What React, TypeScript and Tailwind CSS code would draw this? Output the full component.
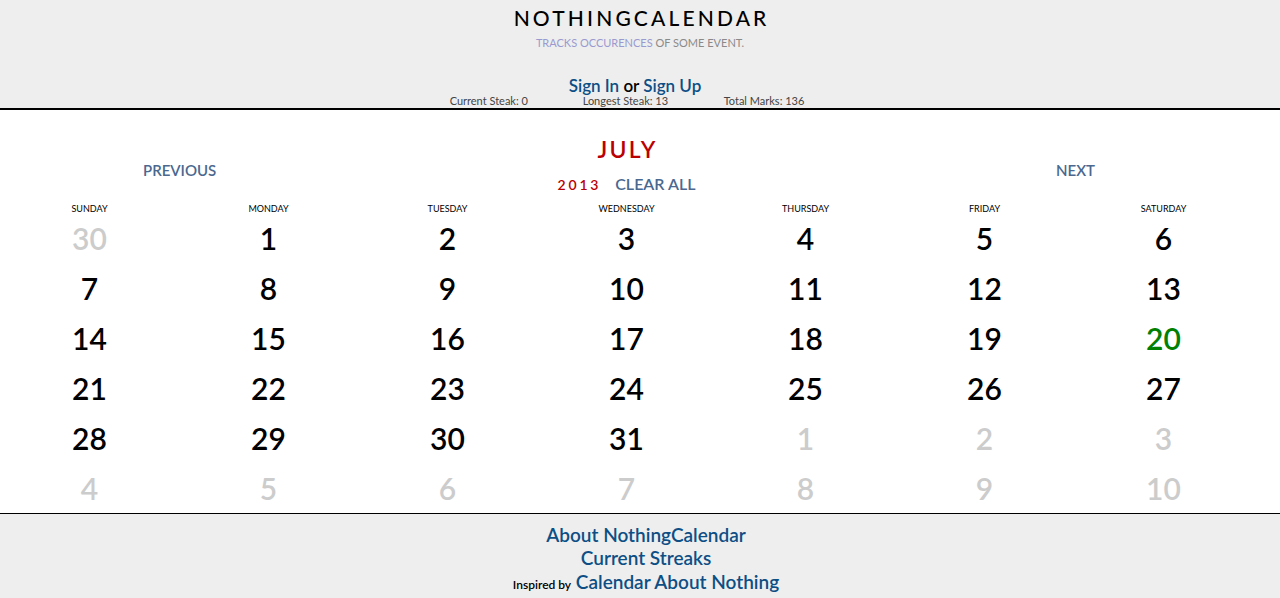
import React from 'react';

const DAYS = ['SUNDAY', 'MONDAY', 'TUESDAY', 'WEDNESDAY', 'THURSDAY', 'FRIDAY', 'SATURDAY'];

type Cell = { n: number; kind: 'other' | 'cur' | 'today' };

function buildCells(): Cell[] {
  const cells: Cell[] = [{ n: 30, kind: 'other' }];
  for (let d = 1; d <= 31; d++) cells.push({ n: d, kind: d === 20 ? 'today' : 'cur' });
  for (let d = 1; d <= 10; d++) cells.push({ n: d, kind: 'other' });
  return cells;
}

export default function App() {
  const cells = buildCells();
  return (
    <div className="min-h-[598px] bg-[#eeeeee] font-['Lato',sans-serif] text-black">
      <header className="h-[110px] border-b-2 border-black flex flex-col items-center">
        <h1 className="mt-[6px] text-[21px] leading-[24px] tracking-[0.15em] font-medium pl-[0.15em]">
          NOTHINGCALENDAR
        </h1>
        <p className="mt-[6px] text-[11px] leading-[14px] text-[#8a8a8a]">
          <span className="text-[#9a9ad0]">TRACKS OCCURENCES</span> OF SOME EVENT.
        </p>
        <p className="mt-[26px] text-[17px] leading-[20px] font-semibold pr-[10px]">
          <a className="text-[#0d4f85]">Sign In</a> or <a className="text-[#0d4f85]">Sign Up</a>
        </p>
        <div className="mt-[-1px] flex text-[11px] leading-[12px] text-[#444] pr-[26px]">
          <span className="w-[133px]">Current Steak: 0</span>
          <span className="w-[141px]">Longest Steak: 13</span>
          <span>Total Marks: 136</span>
        </div>
      </header>

      <main className="bg-white h-[404px] border-b border-black">
        <div className="w-[1253px]">
          <div className="relative h-[87px]">
            <div className="flex flex-col items-center pt-[25px]">
              <div className="text-[23px] leading-[28px] tracking-[0.1em] pl-[0.1em] text-[#bb0000] font-semibold">JULY</div>
              <div className="mt-[9px] flex items-center gap-[14px]">
                <span className="text-[14px] tracking-[0.2em] text-[#bb0000] font-semibold">2013</span>
                <a className="text-[16px] text-[#4a6890] font-semibold">CLEAR ALL</a>
              </div>
            </div>
            <a className="absolute left-[143px] top-[49px] text-[15px] text-[#4a6890] font-semibold">PREVIOUS</a>
            <a className="absolute left-[1056px] top-[49px] text-[15px] text-[#4a6890] font-semibold">NEXT</a>
          </div>
          <div className="grid grid-cols-7">
            {DAYS.map((d) => (
              <div key={d} className="h-[16px] pt-[2px] text-center text-[9px] leading-[20px] text-black">
                {d}
              </div>
            ))}
            {cells.map((c, i) => (
              <div
                key={i}
                className={
                  'text-center text-[30px] leading-[50px] font-semibold ' +
                  (c.kind === 'other' ? 'text-[#cccccc]' : c.kind === 'today' ? 'text-[#008000]' : 'text-black')
                }
              >
                {c.n}
              </div>
            ))}
          </div>
        </div>
      </main>

      <footer className="flex flex-col items-center pt-[9px] pl-[12px] text-[19px] leading-[23px] text-[#0d4f85] font-semibold">
        <a>About NothingCalendar</a>
        <a>Current Streaks</a>
        <div className="mt-[1px]">
          <span className="text-[12px] text-black">Inspired by</span> <a>Calendar About Nothing</a>
        </div>
      </footer>
    </div>
  );
}
